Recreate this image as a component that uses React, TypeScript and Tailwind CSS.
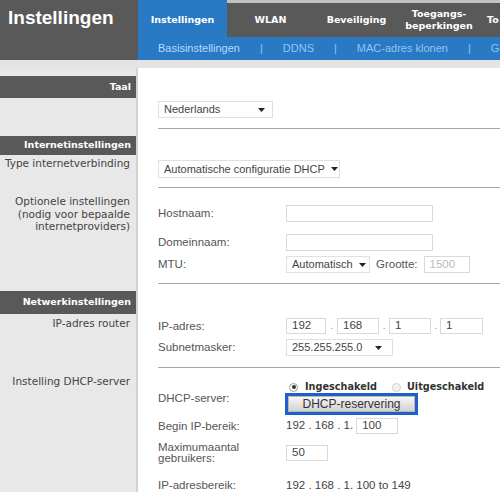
import React from "react";

const Caret = () => (
  <svg width="7" height="4" viewBox="0 0 7 4" className="shrink-0">
    <path d="M0 0h7L3.5 4z" fill="#222" />
  </svg>
);

const Select = ({ value, className }: { value: string; className: string }) => (
  <div
    className={`flex items-center justify-between gap-[6px] whitespace-nowrap border border-[#e0e0e0] bg-white pl-[5px] pr-[6px] text-[11px] text-[#444] ${className}`}
  >
    <span>{value}</span>
    <Caret />
  </div>
);

const Box = ({ value, className }: { value?: string; className: string }) => (
  <div
    className={`flex items-center whitespace-nowrap border border-[#d9d9d9] bg-white pl-[5px] text-[#444] ${className}`}
  >
    {value}
  </div>
);

const Radio = ({ checked }: { checked?: boolean }) => (
  <span
    className={`flex h-[9px] w-[9px] shrink-0 items-center justify-center rounded-full border ${
      checked ? "border-[#9a9a9a] bg-white" : "border-[#cfcfcf] bg-[#f2f2f2]"
    }`}
  >
    {checked && <span className="h-[4px] w-[4px] rounded-full bg-[#333]" />}
  </span>
);

const Bar = ({ text, className }: { text: string; className: string }) => (
  <div
    className={`flex items-center justify-end whitespace-nowrap bg-[#595959] pr-[5px] font-['DejaVu_Sans',sans-serif] text-[9.5px] font-bold text-white ${className}`}
  >
    {text}
  </div>
);

const SideText = ({ children, className }: { children: React.ReactNode; className?: string }) => (
  <div
    className={`whitespace-nowrap pr-[6px] text-right font-['DejaVu_Sans',sans-serif] text-[10.5px] leading-[12.5px] text-[#444] ${className ?? ""}`}
  >
    {children}
  </div>
);

const Label = ({ children }: { children: React.ReactNode }) => (
  <div className="w-[128px] shrink-0 whitespace-nowrap leading-[11px] text-[#555]">{children}</div>
);

const Section = ({
  left,
  right,
  height,
  last,
}: {
  left: React.ReactNode;
  right: React.ReactNode;
  height: string;
  last?: boolean;
}) => (
  <div className={`flex ${height}`}>
    <div className="w-[138px] shrink-0 border-r-[2px] border-[#d2d2d2] bg-[#e8e8e8]">{left}</div>
    <div className="min-w-0 flex-1 bg-white">
      <div className={`ml-[20px] h-full ${last ? "" : "border-b border-[#a6a6a6]"}`}>{right}</div>
    </div>
  </div>
);

export default function App() {
  const tabs = [
    { label: "WLAN", w: "w-[87px]" },
    { label: "Beveiliging", w: "w-[85px]" },
    { label: "Toegangs-\nbeperkingen", w: "w-[80px]" },
  ];

  return (
    <div className="h-[492px] w-[500px] overflow-hidden bg-[#e8e8e8] font-['Liberation_Sans',Arial,sans-serif] text-[11.5px]">
      {/* header */}
      <div className="flex h-[60px]">
        <div className="w-[138px] shrink-0 bg-[#595959] pl-[8px] pt-[4px] text-[19px] font-bold text-white">
          Instellingen
        </div>
        <div className="flex min-w-0 flex-1 flex-col overflow-hidden">
          <div className="flex h-[37px] bg-[#595959] font-['DejaVu_Sans',sans-serif] text-[9.5px] font-bold text-white">
            <div className="flex w-[89px] shrink-0 items-center justify-center bg-[#2a79c4] pt-[3px]">
              Instellingen
            </div>
            {tabs.map((t) => (
              <div
                key={t.label}
                className={`flex shrink-0 items-center justify-center whitespace-pre border-t-[3px] border-[#c2c2c2] text-center leading-[12px] ${t.w}`}
              >
                {t.label}
              </div>
            ))}
            <div className="flex min-w-0 flex-1 items-center overflow-hidden whitespace-nowrap border-t-[3px] border-[#c2c2c2] pl-[8px]">
              To
            </div>
          </div>
          <div className="flex h-[23px] items-center gap-[20px] overflow-hidden whitespace-nowrap bg-[#2a79c4] pl-[20px] text-[11px] text-[#8fc6f5]">
            <span className="text-[#b3dcff]">Basisinstellingen</span>
            <span>|</span>
            <span>DDNS</span>
            <span>|</span>
            <span>MAC-adres klonen</span>
            <span>|</span>
            <span>Ge</span>
          </div>
        </div>
      </div>
      <div className="h-[8px] bg-[#e4e4e4]" />

      {/* Taal */}
      <Section
        height="h-[61px]"
        left={<Bar text="Taal" className="mt-[8px] h-[22px]" />}
        right={
          <div className="pt-[33px]">
            <Select value="Nederlands" className="h-[17px] w-[115px] pr-[7px]" />
          </div>
        }
      />

      {/* Internetinstellingen */}
      <Section
        height="h-[59px]"
        left={
          <>
            <Bar text="Internetinstellingen" className="mt-[7px] h-[19px]" />
            <SideText className="pt-[2px]">Type internetverbinding</SideText>
          </>
        }
        right={
          <div className="pt-[31px]">
            <Select value="Automatische configuratie DHCP" className="h-[18px] w-[182px] pr-[7px]" />
          </div>
        }
      />

      {/* Optionele instellingen */}
      <Section
        height="h-[96px]"
        left={
          <SideText className="pt-[7px]">
            Optionele instellingen
            <br />
            (nodig voor bepaalde
            <br />
            internetproviders)
          </SideText>
        }
        right={
          <div className="flex flex-col pt-[17px]">
            <div className="flex h-[17px] items-center">
              <Label>Hostnaam:</Label>
              <Box className="h-[17px] w-[147px]" />
            </div>
            <div className="mt-[12px] flex h-[17px] items-center">
              <Label>Domeinnaam:</Label>
              <Box className="h-[17px] w-[147px]" />
            </div>
            <div className="mt-[5px] flex h-[17px] items-center">
              <Label>MTU:</Label>
              <Select value="Automatisch" className="h-[17px] w-[84px]" />
              <span className="ml-[6px] text-[#555]">Grootte:</span>
              <Box value="1500" className="ml-[6px] h-[17px] w-[46px] !text-[#bbb]" />
            </div>
          </div>
        }
      />

      {/* Netwerkinstellingen */}
      <Section
        height="h-[84px]"
        left={
          <>
            <Bar text="Netwerkinstellingen" className="mt-[7px] h-[23px]" />
            <SideText className="pt-[3px]">IP-adres router</SideText>
          </>
        }
        right={
          <div className="flex flex-col pt-[34px]">
            <div className="flex h-[16px] items-center">
              <Label>IP-adres:</Label>
              <Box value="192" className="h-[16px] w-[40px]" />
              <span className="w-[11px] text-center text-[#999]">.</span>
              <Box value="168" className="h-[16px] w-[42px]" />
              <span className="w-[10px] text-center text-[#999]">.</span>
              <Box value="1" className="h-[16px] w-[42px]" />
              <span className="w-[9px] text-center text-[#999]">.</span>
              <Box value="1" className="h-[16px] w-[43px]" />
            </div>
            <div className="mt-[5px] flex h-[17px] items-center">
              <Label>Subnetmasker:</Label>
              <Select value="255.255.255.0" className="h-[17px] w-[107px] pr-[10px]" />
            </div>
          </div>
        }
      />

      {/* DHCP */}
      <Section
        height="h-[140px]"
        last
        left={<SideText className="pt-[7px]">Instelling DHCP-server</SideText>}
        right={
          <div className="flex flex-col pt-[13px]">
            <div className="flex items-center">
              <Label>DHCP-server:</Label>
              <div className="flex flex-col">
                <div className="flex h-[12px] items-center whitespace-nowrap font-['DejaVu_Sans',sans-serif] text-[9.7px] font-bold text-[#333]">
                  <span className="ml-[3px]">
                    <Radio checked />
                  </span>
                  <span className="ml-[7px]">Ingeschakeld</span>
                  <span className="ml-[15px]">
                    <Radio />
                  </span>
                  <span className="ml-[6px]">Uitgeschakeld</span>
                </div>
                <div className="ml-[-1px] h-[22px] w-[133px] border-[3px] border-[#1f5fc9] bg-white">
                  <div className="flex h-full items-center justify-center border border-[#b8b8b8] bg-gradient-to-b from-[#f7f7f7] to-[#d2d2d2] text-[12px] text-[#333]">
                    DHCP-reservering
                  </div>
                </div>
              </div>
            </div>
            <div className="mt-[3px] flex h-[16px] items-center">
              <Label>Begin IP-bereik:</Label>
              <span className="whitespace-nowrap text-[#444]">192 . 168 . 1.</span>
              <Box value="100" className="ml-[3px] h-[16px] w-[42px]" />
            </div>
            <div className="mt-[8px] flex h-[22px] items-center">
              <Label>
                Maximumaantal
                <br />
                gebruikers:
              </Label>
              <Box value="50" className="h-[16px] w-[42px]" />
            </div>
            <div className="mt-[13px] flex items-center">
              <Label>IP-adresbereik:</Label>
              <span className="whitespace-nowrap text-[#444]">192 . 168 . 1. 100 to 149</span>
            </div>
          </div>
        }
      />
    </div>
  );
}
